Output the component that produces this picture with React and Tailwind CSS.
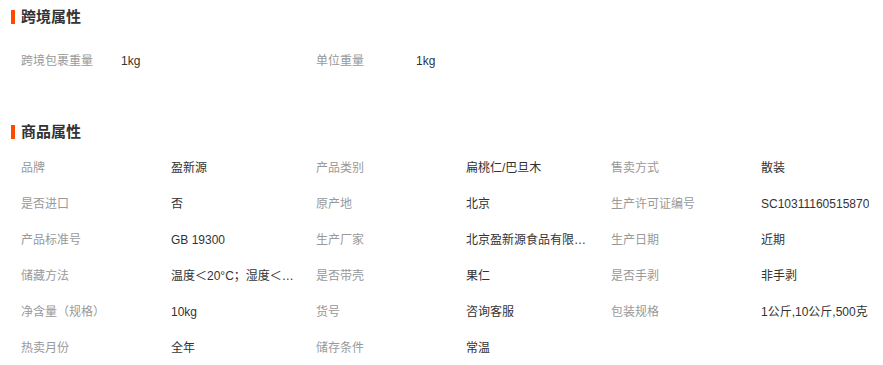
import React from 'react';

const crossBorder = [
  { label: "跨境包裹重量", value: "1kg" },
  { label: "单位重量", value: "1kg" },
];

const attrs = [
  { label: "品牌", value: "盈新源" },
  { label: "产品类别", value: "扁桃仁/巴旦木" },
  { label: "售卖方式", value: "散装" },
  { label: "是否进口", value: "否" },
  { label: "原产地", value: "北京" },
  { label: "生产许可证编号", value: "SC10311160515870" },
  { label: "产品标准号", value: "GB 19300" },
  { label: "生产厂家", value: "北京盈新源食品有限公司" },
  { label: "生产日期", value: "近期" },
  { label: "储藏方法", value: "温度＜20°C；湿度＜65%" },
  { label: "是否带壳", value: "果仁" },
  { label: "是否手剥", value: "非手剥" },
  { label: "净含量（规格）", value: "10kg" },
  { label: "货号", value: "咨询客服" },
  { label: "包装规格", value: "1公斤,10公斤,500克" },
  { label: "热卖月份", value: "全年" },
  { label: "储存条件", value: "常温" },
];

const SectionTitle = ({ children }) => (
  <div className="flex items-center h-[34px] pl-[11px]">
    <span className="w-[4px] h-[14px] bg-[#ff4a00] mr-[6px]" />
    <h3 className="text-[15px] font-bold text-[#333]">{children}</h3>
  </div>
);

export default function App() {
  return (
    <div
      className="w-[883px] h-[365px] bg-white overflow-hidden"
      style={{ fontFamily: '"Liberation Sans", "Noto Sans CJK SC", sans-serif' }}
    >
      <SectionTitle>跨境属性</SectionTitle>
      <div className="grid grid-cols-[295px_295px] pl-[21px] mt-[9px]">
        {crossBorder.map((item) => (
          <div key={item.label} className="flex items-center h-[36px] text-[12px]">
            <span className="w-[100px] text-[#999]">{item.label}</span>
            <span className="text-[#333]">{item.value}</span>
          </div>
        ))}
      </div>

      <div className="mt-[36px]">
        <SectionTitle>商品属性</SectionTitle>
        <div className="grid grid-cols-[295px_295px_272px] pl-[21px] pt-[1px]">
          {attrs.map((item) => (
            <div key={item.label} className="flex items-center h-[36px] text-[12px]">
              <span className="w-[150px] shrink-0 text-[#999]">{item.label}</span>
              <span className="max-w-[127px] truncate text-[#333] whitespace-nowrap">{item.value}</span>
            </div>
          ))}
        </div>
      </div>
    </div>
  );
}
